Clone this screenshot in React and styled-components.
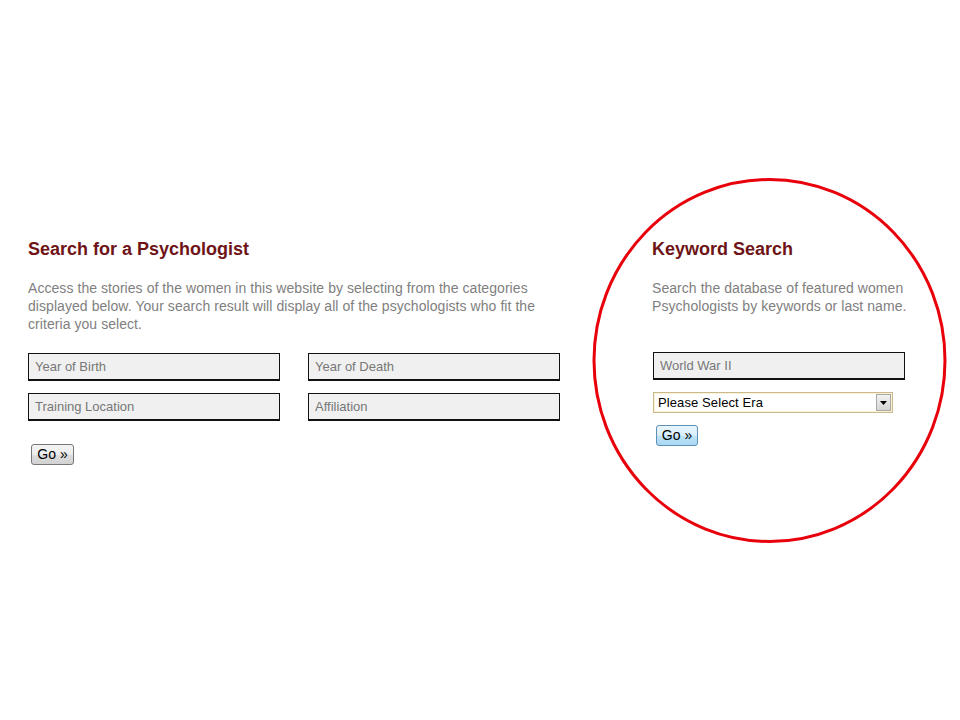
import React from "react";
import styled, { createGlobalStyle } from "styled-components";

const Global = createGlobalStyle`
  html, body { margin: 0; padding: 0; background: #fff; }
  body { font-family: "Liberation Sans", Arial, sans-serif; }
`;

const Page = styled.div`
  position: relative;
  width: 960px;
  height: 720px;
  overflow: hidden;
`;

const Columns = styled.div`
  display: flex;
  padding: 238px 0 0 28px;
  gap: 92px;
`;

const Column = styled.section`
  width: ${(p) => p.$width}px;
  display: flex;
  flex-direction: column;
  align-items: flex-start;
`;

const Heading = styled.h2`
  margin: 0;
  font-size: 18px;
  line-height: 22px;
  font-weight: bold;
  color: #6e1416;
`;

const Intro = styled.p`
  margin: 19px 0 0;
  font-size: 14px;
  line-height: 18px;
  letter-spacing: 0.06px;
  color: #808080;
`;

const FieldGrid = styled.div`
  display: grid;
  grid-template-columns: 252px 252px;
  column-gap: 28px;
  row-gap: 12px;
  margin-top: 20px;
`;

const TextField = styled.input`
  box-sizing: border-box;
  width: ${(p) => p.$width || 252}px;
  height: 28px;
  margin: ${(p) => p.$margin || "0"};
  padding: 0 6px;
  border: 1px solid #111;
  border-bottom-width: 2px;
  background: #f0f0f0;
  font-family: "Liberation Sans", Arial, sans-serif;
  font-size: 13px;
  color: #777;
  outline: none;
  &::placeholder { color: #777; }
`;

const GoButton = styled.button`
  box-sizing: border-box;
  height: 21px;
  width: ${(p) => (p.$blue ? 42 : 43)}px;
  margin: ${(p) => p.$margin};
  padding: 0 0 1px;
  border: 1px solid ${(p) => (p.$blue ? "#5e8fb5" : "#777")};
  border-radius: 3px;
  background: ${(p) =>
    p.$blue
      ? "linear-gradient(#e8f5fc 0%, #d8eefb 50%, #bfe3f7 51%, #a9d8f3 100%)"
      : "linear-gradient(#f4f4f4 0%, #ececec 50%, #dedede 51%, #d2d2d2 100%)"};
  font-family: "Liberation Sans", Arial, sans-serif;
  font-size: 14px;
  color: #000;
  cursor: pointer;
`;

const SelectBox = styled.div`
  box-sizing: border-box;
  display: flex;
  align-items: stretch;
  width: 240px;
  height: 21px;
  margin: 12px 0 0 1px;
  border: 1px solid #c9b98c;
  box-shadow: inset 0 0 0 1px #fbf3d6;
  background: #fff;
`;

const EraSelect = styled.select`
  flex: 1;
  appearance: none;
  -webkit-appearance: none;
  border: none;
  background: transparent;
  padding: 0 4px;
  font-family: "Liberation Sans", Arial, sans-serif;
  font-size: 13px;
  letter-spacing: 0.1px;
  color: #000;
  outline: none;
`;

const ArrowBox = styled.div`
  width: 15px;
  margin: 1px 1px 1px 0;
  display: flex;
  align-items: center;
  justify-content: center;
  background: linear-gradient(#f2f2f2, #d4d4d4);
  border: 1px solid #a8a8a8;
  box-sizing: border-box;
`;

const Ring = styled.svg`
  position: absolute;
  left: 0;
  top: 0;
  pointer-events: none;
`;

export default function App() {
  return (
    <Page>
      <Global />
      <Columns>
        <Column $width={532}>
          <Heading>Search for a Psychologist</Heading>
          <Intro>
            Access the stories of the women in this website by selecting from the categories
            displayed below. Your search result will display all of the psychologists who fit the
            criteria you select.
          </Intro>
          <FieldGrid>
            <TextField placeholder="Year of Birth" />
            <TextField placeholder="Year of Death" />
            <TextField placeholder="Training Location" />
            <TextField placeholder="Affiliation" />
          </FieldGrid>
          <GoButton $margin="23px 0 0 3px">Go »</GoButton>
        </Column>
        <Column $width={270}>
          <Heading>Keyword Search</Heading>
          <Intro>
            Search the database of featured women
            <br />
            Psychologists by keywords or last name.
          </Intro>
          <TextField placeholder="World War II" $margin="37px 0 0 1px" />
          <SelectBox>
            <EraSelect defaultValue="">
              <option value="">Please Select Era</option>
            </EraSelect>
            <ArrowBox>
              <svg width="7" height="4" viewBox="0 0 7 4">
                <path d="M0 0 H7 L3.5 4 Z" fill="#000" />
              </svg>
            </ArrowBox>
          </SelectBox>
          <GoButton $blue $margin="12px 0 0 4px">Go »</GoButton>
        </Column>
      </Columns>
      <Ring width="960" height="720" viewBox="0 0 960 720">
        <ellipse cx="769.5" cy="360.5" rx="175.5" ry="181" fill="none" stroke="#e8000b" strokeWidth="3" />
      </Ring>
    </Page>
  );
}
